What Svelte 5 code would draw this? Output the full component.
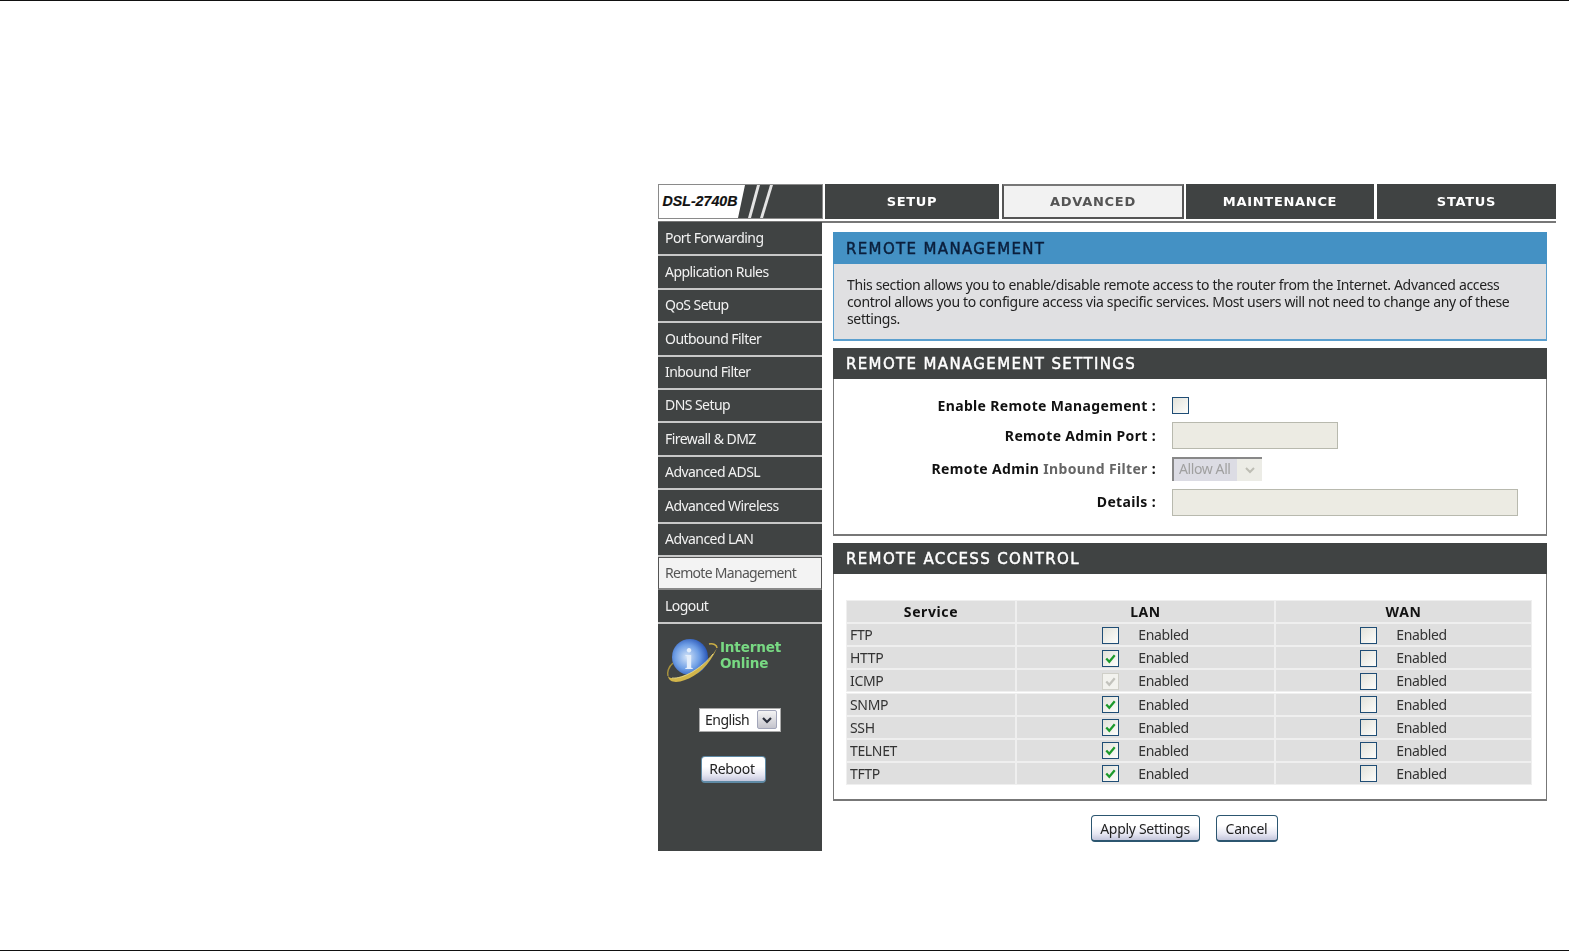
<script>
  const menu = ['Port Forwarding','Application Rules','QoS Setup','Outbound Filter','Inbound Filter','DNS Setup','Firewall & DMZ','Advanced ADSL','Advanced Wireless','Advanced LAN','Remote Management','Logout'];
  const tabs = [
    { label: 'SETUP', cls: 'setup' },
    { label: 'ADVANCED', cls: 'advanced' },
    { label: 'MAINTENANCE', cls: 'maintenance' },
    { label: 'STATUS', cls: 'status' }
  ];
  const rows = [
    { name: 'FTP', lan: 'off' },
    { name: 'HTTP', lan: 'on' },
    { name: 'ICMP', lan: 'dis' },
    { name: 'SNMP', lan: 'on' },
    { name: 'SSH', lan: 'on' },
    { name: 'TELNET', lan: 'on' },
    { name: 'TFTP', lan: 'on' }
  ];
</script>

{#snippet box(state)}
  <span class="cb {state}">
    {#if state !== 'off'}
      <svg viewBox="0 0 16 16" width="16" height="16"><path d="M3.5 8 L6.7 11.5 L12.5 4.5" fill="none" stroke-width="2.4" /></svg>
    {/if}
  </span>
{/snippet}

<div class="page">
  <div class="router">
    <header class="top">
      <div class="logo">
        <svg viewBox="0 0 165 35" width="165" height="35">
          <rect x="0" y="0" width="165" height="35" fill="#404343" />
          <polygon points="1,1 87,1 80,34 1,34" fill="#fff" />
          <polygon points="99,1 102,1 93,34 90,34" fill="#e4e4e4" />
          <polygon points="112,1 115,1 105,34 102,34" fill="#e4e4e4" />
          <rect x="0.5" y="0.5" width="164" height="34" fill="none" stroke="#8a8a8a" />
          <text x="4.5" y="22" class="logotext">DSL-2740B</text>
        </svg>
      </div>
      {#each tabs as t}
        <div class="tab {t.cls}">{t.label}</div>
      {/each}
    </header>
    <div class="rule"></div>
    <div class="body">
      <aside class="side">
        <nav>
          {#each menu as m}
            <div class="item" class:active={m === 'Remote Management'}>{m}</div>
          {/each}
        </nav>
        <div class="status-line">
          <svg class="globe" viewBox="0 0 55 48" width="55" height="48">
            <defs>
              <radialGradient id="g" cx="0.42" cy="0.5" r="0.62">
                <stop offset="0" stop-color="#d4e4f8" />
                <stop offset="0.55" stop-color="#6f9fe6" />
                <stop offset="1" stop-color="#1d49ad" />
              </radialGradient>
            </defs>
            <path d="M44 8 C48 7 52 9 52 12" fill="none" stroke="#c9ad45" stroke-width="1.5" />
            <path d="M8 27 C3 31 2 37 3 40" fill="none" stroke="#a8933e" stroke-width="1.5" />
            <circle cx="25" cy="21" r="18" fill="url(#g)" />
            <text x="24" y="33" class="globe-i">i</text>
            <path d="M3 40 C4 47 12 47 20 44 C32 40 44 30 52 12 C44 26 30 36 18 40 C10 43 5 43 3 40 Z" fill="#d2b54a" />
            <path d="M7 42 C18 43 36 33 48 18" fill="none" stroke="#f3e593" stroke-width="0.8" />
          </svg>
          <div class="online">Internet<br />Online</div>
        </div>
        <div class="lang">
          <span>English</span>
          <span class="arrow"><svg viewBox="0 0 10 8" width="10" height="8"><path d="M1 2 L5 6 L9 2" fill="none" stroke="#2a2f3c" stroke-width="2.2" /></svg></span>
        </div>
        <button class="btn reboot">Reboot</button>
      </aside>
      <main class="main">
        <section class="panel blue">
          <h2>REMOTE MANAGEMENT</h2>
          <p>This section allows you to enable/disable remote access to the router from the Internet. Advanced access control allows you to configure access via specific services. Most users will not need to change any of these settings.</p>
        </section>
        <section class="panel">
          <h2>REMOTE MANAGEMENT SETTINGS</h2>
          <div class="form">
            <div class="fl r1">Enable Remote Management :</div>
            <div class="r1 fv">{@render box('off')}</div>
            <div class="fl r2">Remote Admin Port :</div>
            <div class="r2 fv"><span class="inp port"></span></div>
            <div class="fl r3">Remote Admin <span class="grey">Inbound Filter</span> :</div>
            <div class="r3 fv">
              <span class="dsel"><span class="dtext">Allow All</span><span class="darrow"><svg viewBox="0 0 10 8" width="10" height="8"><path d="M1 2 L5 6 L9 2" fill="none" stroke="#bdbdb4" stroke-width="2" /></svg></span></span>
            </div>
            <div class="fl r4">Details :</div>
            <div class="r4 fv"><span class="inp details"></span></div>
          </div>
        </section>
        <section class="panel">
          <h2>REMOTE ACCESS CONTROL</h2>
          <div class="grid">
            <div class="th">Service</div>
            <div class="th">LAN</div>
            <div class="th">WAN</div>
            {#each rows as r}
              <div class="td name">{r.name}</div>
              <div class="td chk">{@render box(r.lan)}<span>Enabled</span></div>
              <div class="td chk">{@render box('off')}<span>Enabled</span></div>
            {/each}
          </div>
        </section>
        <div class="actions">
          <button class="btn apply">Apply Settings</button>
          <button class="btn cancel">Cancel</button>
        </div>
      </main>
    </div>
  </div>
</div>

<style>
  :global(body) {
    margin: 0;
    background: #fff;
  }
  .page {
    box-sizing: border-box;
    width: 1569px;
    height: 951px;
    padding: 183px 0 0 658px;
    border-top: 1px solid #111;
    border-bottom: 1px solid #111;
    font-family: "Noto Sans", "DejaVu Sans", sans-serif;
    font-size: 14px;
    color: #222;
    filter: blur(0.35px);
    overflow: hidden;
  }
  .router {
    width: 898px;
  }
  .top {
    display: flex;
    height: 35px;
  }
  .logo {
    width: 165px;
    height: 35px;
    margin-right: 2px;
  }
  .logo svg {
    display: block;
  }
  .logotext {
    font: italic bold 14.2px "Liberation Sans", sans-serif;
    fill: #111;
    stroke: #111;
    stroke-width: 0.2px;
  }
  .tab {
    display: flex;
    align-items: center;
    justify-content: center;
    box-sizing: border-box;
    padding-bottom: 1px;
    background: #404343;
    color: #fff;
    font: bold 13px "DejaVu Sans", sans-serif;
    letter-spacing: 0.7px;
  }
  .setup { width: 174px; margin-right: 3px; }
  .advanced {
    width: 182px;
    margin-right: 2px;
    background: #f2f2f2;
    color: #555;
    border: 2px solid #555;
    border-top-color: #777;
    padding-bottom: 0;
  }
  .maintenance { width: 188px; margin-right: 3px; }
  .status { width: 179px; }
  .rule {
    height: 2px;
    margin-top: 2px;
    background: #777;
  }
  .body {
    display: flex;
    margin-top: -1px;
    height: 629px;
  }
  .side {
    width: 165px;
    background: #404343;
    display: flex;
    flex-direction: column;
  }
  nav {
    padding-top: 1px;
  }
  .item {
    box-sizing: border-box;
    height: 33.4px;
    padding: 0 0 1.5px 7px;
    display: flex;
    align-items: center;
    color: #f2f2f2;
    border-bottom: 2px solid #c8c8c8;
    font-size: 14px;
    letter-spacing: -0.55px;
  }
  .item.active {
    background: #f3f3f3;
    color: #555;
    border: 1px solid #555;
    border-bottom: 2px solid #888;
    padding-left: 6px;
    letter-spacing: -0.7px;
  }
  .status-line {
    display: flex;
    align-items: flex-start;
    padding: 12px 0 0 7px;
    height: 55px;
  }
  .globe {
    flex: none;
  }
  .globe-i {
    font: bold 30px "Liberation Serif", serif;
    fill: #e4eefb;
    text-anchor: middle;
  }
  .online {
    color: #78d983;
    font: bold 13.6px/16px "DejaVu Sans", sans-serif;
    margin-top: 3px;
    letter-spacing: -0.2px;
  }
  .lang {
    box-sizing: border-box;
    align-self: flex-start;
    margin: 17px 0 0 41px;
    width: 82px;
    height: 24px;
    background: #fff;
    border: 1px solid #aaa;
    color: #222;
    display: flex;
    align-items: center;
    justify-content: space-between;
    padding: 0 3px 1px 5px;
    letter-spacing: -0.5px;
    font-size: 14px;
  }
  .arrow {
    box-sizing: border-box;
    width: 20px;
    height: 19px;
    margin-top: 1px;
    background: linear-gradient(#f4f4f4, #c4c4cc);
    border: 1px solid #a2a6ba;
    border-radius: 2px;
    display: flex;
    align-items: center;
    justify-content: center;
  }
  .btn {
    box-sizing: border-box;
    height: 27px;
    font: 14px "Noto Sans", "DejaVu Sans", sans-serif;
    color: #222;
    letter-spacing: -0.3px;
    padding: 0;
    border: 1px solid #2c5670;
    border-bottom-width: 2px;
    border-radius: 4px;
    background: linear-gradient(#ffffff 40%, #e6e6f2 75%, #c4c6dc);
  }
  .reboot {
    align-self: flex-start;
    margin: 24px 0 0 43px;
    width: 65px;
    padding-right: 3px;
    border-color: #5f8aa5;
  }
  .main {
    flex: 1;
    padding: 10px 9px 0 11px;
    display: flex;
    flex-direction: column;
    gap: 7px;
  }
  .panel {
    box-sizing: border-box;
    width: 714px;
    border: 1px solid #666;
    border-top: 0;
    border-bottom-width: 2px;
    border-color: #777;
  }
  h2 {
    box-sizing: border-box;
    margin: 0 -1px;
    height: 31px;
    padding: 1px 0 0 13px;
    display: flex;
    align-items: center;
    background: #404343;
    color: #fff;
    font: 400 15px "DejaVu Sans", sans-serif;
    -webkit-text-stroke: 0.45px currentColor;
    letter-spacing: 1.35px;
  }
  .blue {
    height: 109px;
    background: #e0e0e2;
    border-color: #5b9fce;
  }
  .blue h2 {
    background: #4491c4;
    color: #0b1f3c;
    height: 32px;
  }
  .blue p {
    margin: 12px 0 0 13px;
    width: 680px;
    font-size: 14px;
    line-height: 17px;
    letter-spacing: -0.35px;
  }
  .form {
    display: grid;
    grid-template-columns: 322px 1fr;
    grid-template-rows: 30px 30px 36px 31px;
    column-gap: 16px;
    align-items: center;
    padding-top: 11px;
    box-sizing: border-box;
    height: 155px;
  }
  .fl {
    text-align: right;
    font-weight: 700;
    font-size: 14px;
    color: #111;
    letter-spacing: 0.35px;
  }
  .fv {
    display: flex;
    align-items: center;
  }
  .grey { color: #666; }
  .inp {
    box-sizing: border-box;
    height: 27px;
    background: #ecebe3;
    border: 1px solid #b8b9ae;
    display: block;
  }
  .port { width: 166px; }
  .details { width: 346px; margin-top: 1px; }
  .dsel {
    box-sizing: border-box;
    width: 90px;
    height: 24px;
    margin-top: 1px;
    display: flex;
    align-items: center;
    border-left: 2px solid #888;
    border-top: 2px solid #888;
    background: #ecece6;
  }
  .dtext {
    width: 63px;
    height: 100%;
    padding-left: 5px;
    box-sizing: border-box;
    background: #dcdce4;
    color: #a0a0a0;
    font-size: 14px;
    letter-spacing: -0.4px;
    line-height: 20px;
  }
  .darrow {
    flex: 1;
    display: flex;
    justify-content: center;
  }
  .cb {
    box-sizing: border-box;
    flex: none;
    width: 17px;
    height: 17px;
    display: block;
    margin-top: 1px;
    border: 1px solid #1f4d75;
    background: linear-gradient(135deg, #e2e2da, #fdfdfb);
  }
  .cb svg {
    display: block;
    width: 15px;
    height: 15px;
    stroke: #1d9a2c;
  }
  .cb.dis {
    border-color: #cfcfc8;
    background: #f2f2ee;
  }
  .cb.dis svg {
    stroke: #c2c2bc;
  }
  .grid {
    display: grid;
    grid-template-columns: 168px 257px 255px;
    gap: 2.13px 2px;
    grid-auto-rows: 21px;
    padding: 27px 0 0 13px;
    height: 225px;
    box-sizing: border-box;
  }
  .th {
    background: #dfdfdf;
    box-shadow: 0 0 0 1px #efefef;
    text-align: center;
    font-weight: 700;
    color: #111;
    line-height: 21px;
    font-size: 14px;
    letter-spacing: 0.6px;
  }
  .td {
    background: #dfdfdf;
    box-shadow: 0 0 0 1px #efefef;
    display: flex;
    align-items: center;
    color: #333;
    letter-spacing: -0.35px;
  }
  .name {
    padding-left: 3px;
  }
  .chk {
    justify-content: center;
    gap: 19px;
  }
  .actions {
    display: flex;
    justify-content: center;
    gap: 16px;
    width: 702px;
    margin-top: 7px;
  }
  .apply { width: 109px; }
  .cancel { width: 62px; }
</style>
